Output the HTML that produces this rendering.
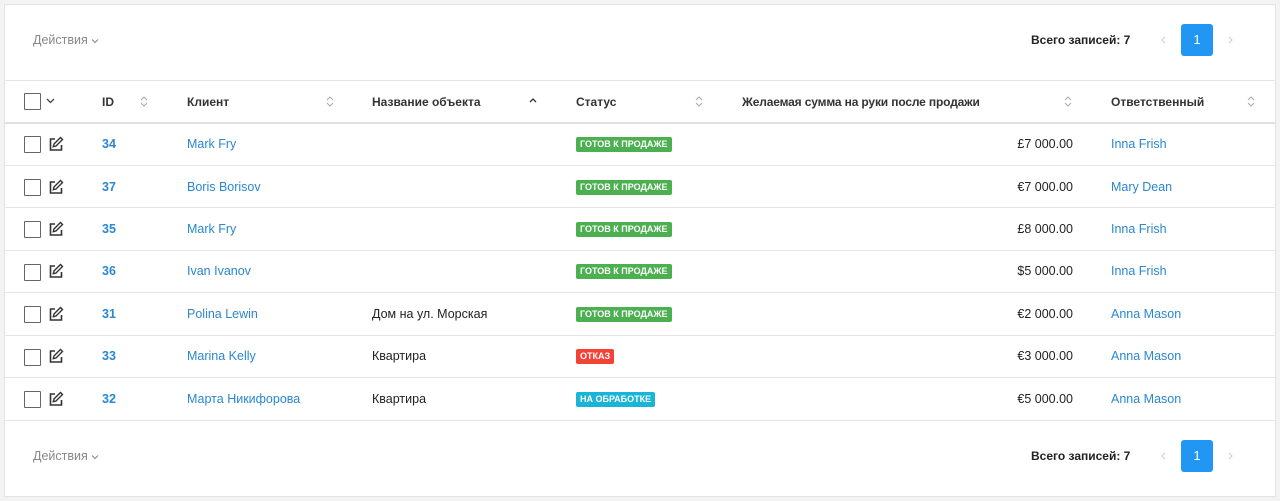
<!DOCTYPE html>
<html><head><meta charset="utf-8"><style>
*{margin:0;padding:0;box-sizing:border-box}
body{width:1280px;height:501px;background:#f3f3f3;font-family:"Liberation Sans",sans-serif;font-size:12.5px;color:#222;position:relative;overflow:hidden}
.card{position:absolute;left:4px;top:4px;width:1272px;height:493px;background:#fff;border:1px solid #e3e3e3}
.a{position:absolute;white-space:nowrap}
.line{position:absolute;left:5px;width:1270px;height:1px;background:#e6e6e6}
.cb{position:absolute;left:24px;width:17px;height:17px;border:1.5px solid #666;border-radius:1px;background:#fff}
.h{font-weight:bold;color:#333;font-size:12px}
.lnk{color:#2a87d0}
.id{color:#2a87d0;font-weight:bold}
.badge{position:absolute;left:576px;height:15px;line-height:15px;padding:0 4px;color:#fff;font-size:9px;font-weight:bold;border-radius:2px}
.g{background:#4caf50}.r{background:#f44336}.c{background:#1ab4d6}
.amt{position:absolute;right:207px;text-align:right}
.btn{position:absolute;left:1181px;width:32px;height:32px;background:#2196f3;color:#fff;border-radius:3px;text-align:center;line-height:32px;font-size:13px}
.act{color:#888}
</style></head><body>
<div class="card"></div>
<div class="a act" style="left:33px;top:33px">Действия</div>
<svg class="a" style="left:91px;top:38px" width="8" height="6"><path d="M1 1.5l3 3 3-3" stroke="#888" fill="none"/></svg>
<div class="a" style="left:1031px;top:33px;font-weight:bold;font-size:12px">Всего записей: 7</div>
<svg class="a" style="left:1161px;top:36px" width="5" height="8"><path d="M4 1L1 4l3 3" stroke="#ccc" fill="none"/></svg>
<div class="btn" style="top:24px">1</div>
<svg class="a" style="left:1228px;top:36px" width="5" height="8"><path d="M1 1l3 3-3 3" stroke="#ccc" fill="none"/></svg>
<div class="line" style="top:80px"></div>
<div class="cb" style="top:93px"></div>
<svg class="a" style="left:46px;top:98px" width="9" height="6"><path d="M1 1l3.5 3.5L8 1" stroke="#444" fill="none" stroke-width="1.3"/></svg>
<div class="a h" style="left:102px;top:95px">ID</div>
<div class="a h" style="left:187px;top:95px">Клиент</div>
<div class="a h" style="left:372px;top:95px">Название объекта</div>
<div class="a h" style="left:576px;top:95px">Статус</div>
<div class="a h" style="left:742px;top:95px;letter-spacing:-0.15px">Желаемая сумма на руки после продажи</div>
<div class="a h" style="left:1111px;top:95px">Ответственный</div>
<svg class="a" style="left:140px;top:95px" width="8" height="13"><path d="M1 5l3-3 3 3M1 8l3 3 3-3" stroke="#aaa" fill="none"/></svg>
<svg class="a" style="left:326px;top:95px" width="8" height="13"><path d="M1 5l3-3 3 3M1 8l3 3 3-3" stroke="#aaa" fill="none"/></svg>
<svg class="a" style="left:529px;top:97px" width="8" height="8"><path d="M1 5l3-3 3 3" stroke="#333" fill="none" stroke-width="1.3"/></svg>
<svg class="a" style="left:695px;top:95px" width="8" height="13"><path d="M1 5l3-3 3 3M1 8l3 3 3-3" stroke="#aaa" fill="none"/></svg>
<svg class="a" style="left:1064px;top:95px" width="8" height="13"><path d="M1 5l3-3 3 3M1 8l3 3 3-3" stroke="#aaa" fill="none"/></svg>
<svg class="a" style="left:1247px;top:95px" width="8" height="13"><path d="M1 5l3-3 3 3M1 8l3 3 3-3" stroke="#aaa" fill="none"/></svg>
<div class="line" style="top:122px;height:2px;background:#e0e0e0"></div>

<div class="line" style="top:165px"></div><div class="line" style="top:207px"></div><div class="line" style="top:250px"></div><div class="line" style="top:292px"></div><div class="line" style="top:335px"></div><div class="line" style="top:377px"></div><div class="line" style="top:420px"></div>

<div class="cb" style="top:136px"></div><svg class="a" style="left:48px;top:136px" width="16" height="16"><path d="M7 3H2.5v11h11V9" stroke="#333" fill="none" stroke-width="1.6"/><path d="M12.5 1.5l2 2L8 10l-2.7.7L6 8z" stroke="#333" fill="none" stroke-width="1.4"/></svg>
<div class="a id" style="left:102px;top:137px">34</div><div class="a lnk" style="left:187px;top:137px">Mark Fry</div><div class="badge g" style="top:137px">ГОТОВ К ПРОДАЖЕ</div><div class="a amt" style="top:137px">£7 000.00</div><div class="a lnk" style="left:1111px;top:137px">Inna Frish</div>

<div class="cb" style="top:179px"></div><svg class="a" style="left:48px;top:179px" width="16" height="16"><path d="M7 3H2.5v11h11V9" stroke="#333" fill="none" stroke-width="1.6"/><path d="M12.5 1.5l2 2L8 10l-2.7.7L6 8z" stroke="#333" fill="none" stroke-width="1.4"/></svg>
<div class="a id" style="left:102px;top:180px">37</div><div class="a lnk" style="left:187px;top:180px">Boris Borisov</div><div class="badge g" style="top:180px">ГОТОВ К ПРОДАЖЕ</div><div class="a amt" style="top:180px">€7 000.00</div><div class="a lnk" style="left:1111px;top:180px">Mary Dean</div>

<div class="cb" style="top:221px"></div><svg class="a" style="left:48px;top:221px" width="16" height="16"><path d="M7 3H2.5v11h11V9" stroke="#333" fill="none" stroke-width="1.6"/><path d="M12.5 1.5l2 2L8 10l-2.7.7L6 8z" stroke="#333" fill="none" stroke-width="1.4"/></svg>
<div class="a id" style="left:102px;top:222px">35</div><div class="a lnk" style="left:187px;top:222px">Mark Fry</div><div class="badge g" style="top:222px">ГОТОВ К ПРОДАЖЕ</div><div class="a amt" style="top:222px">£8 000.00</div><div class="a lnk" style="left:1111px;top:222px">Inna Frish</div>

<div class="cb" style="top:264px"></div><svg class="a" style="left:48px;top:263px" width="16" height="16"><path d="M7 3H2.5v11h11V9" stroke="#333" fill="none" stroke-width="1.6"/><path d="M12.5 1.5l2 2L8 10l-2.7.7L6 8z" stroke="#333" fill="none" stroke-width="1.4"/></svg>
<div class="a id" style="left:102px;top:264px">36</div><div class="a lnk" style="left:187px;top:264px">Ivan Ivanov</div><div class="badge g" style="top:264px">ГОТОВ К ПРОДАЖЕ</div><div class="a amt" style="top:264px">$5 000.00</div><div class="a lnk" style="left:1111px;top:264px">Inna Frish</div>

<div class="cb" style="top:306px"></div><svg class="a" style="left:48px;top:306px" width="16" height="16"><path d="M7 3H2.5v11h11V9" stroke="#333" fill="none" stroke-width="1.6"/><path d="M12.5 1.5l2 2L8 10l-2.7.7L6 8z" stroke="#333" fill="none" stroke-width="1.4"/></svg>
<div class="a id" style="left:102px;top:307px">31</div><div class="a lnk" style="left:187px;top:307px">Polina Lewin</div><div class="a" style="left:372px;top:307px">Дом на ул. Морская</div><div class="badge g" style="top:307px">ГОТОВ К ПРОДАЖЕ</div><div class="a amt" style="top:307px">€2 000.00</div><div class="a lnk" style="left:1111px;top:307px">Anna Mason</div>

<div class="cb" style="top:349px"></div><svg class="a" style="left:48px;top:348px" width="16" height="16"><path d="M7 3H2.5v11h11V9" stroke="#333" fill="none" stroke-width="1.6"/><path d="M12.5 1.5l2 2L8 10l-2.7.7L6 8z" stroke="#333" fill="none" stroke-width="1.4"/></svg>
<div class="a id" style="left:102px;top:349px">33</div><div class="a lnk" style="left:187px;top:349px">Marina Kelly</div><div class="a" style="left:372px;top:349px">Квартира</div><div class="badge r" style="top:349px">ОТКАЗ</div><div class="a amt" style="top:349px">€3 000.00</div><div class="a lnk" style="left:1111px;top:349px">Anna Mason</div>

<div class="cb" style="top:391px"></div><svg class="a" style="left:48px;top:391px" width="16" height="16"><path d="M7 3H2.5v11h11V9" stroke="#333" fill="none" stroke-width="1.6"/><path d="M12.5 1.5l2 2L8 10l-2.7.7L6 8z" stroke="#333" fill="none" stroke-width="1.4"/></svg>
<div class="a id" style="left:102px;top:392px">32</div><div class="a lnk" style="left:187px;top:392px">Марта Никифорова</div><div class="a" style="left:372px;top:392px">Квартира</div><div class="badge c" style="top:392px">НА ОБРАБОТКЕ</div><div class="a amt" style="top:392px">€5 000.00</div><div class="a lnk" style="left:1111px;top:392px">Anna Mason</div>

<div class="a act" style="left:33px;top:449px">Действия</div>
<svg class="a" style="left:91px;top:454px" width="8" height="6"><path d="M1 1.5l3 3 3-3" stroke="#888" fill="none"/></svg>
<div class="a" style="left:1031px;top:449px;font-weight:bold;font-size:12px">Всего записей: 7</div>
<svg class="a" style="left:1161px;top:452px" width="5" height="8"><path d="M4 1L1 4l3 3" stroke="#ccc" fill="none"/></svg>
<div class="btn" style="top:440px">1</div>
<svg class="a" style="left:1228px;top:452px" width="5" height="8"><path d="M1 1l3 3-3 3" stroke="#ccc" fill="none"/></svg>
</body></html>
